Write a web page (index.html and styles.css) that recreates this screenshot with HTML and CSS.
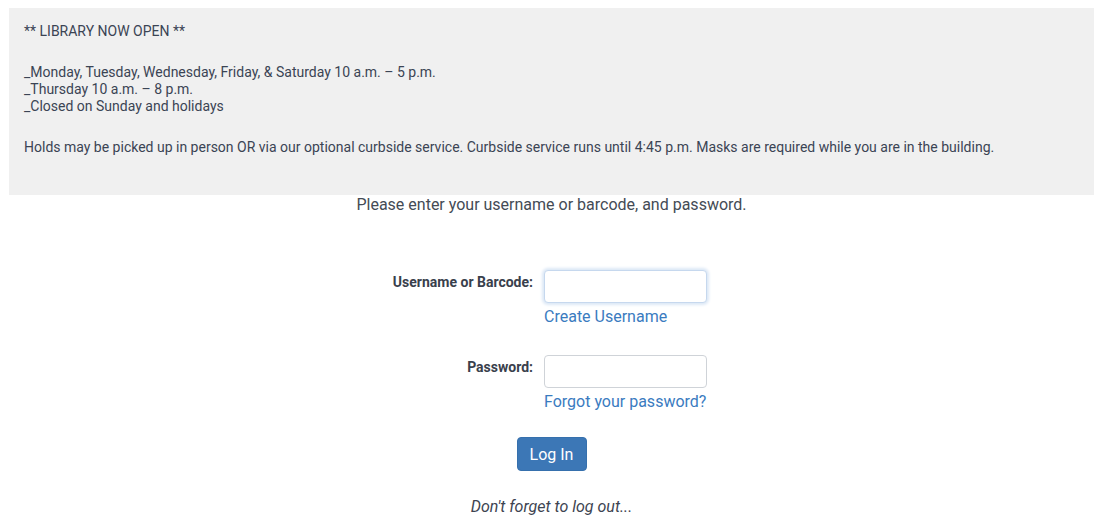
FILE: index.html
```html
<!DOCTYPE html>
<html>
<head>
<meta charset="utf-8">
<link rel="stylesheet" href="styles.css">
</head>
<body>
<div class="page">
  <div class="notice">
    <p>** LIBRARY NOW OPEN **</p>
    <p>_Monday, Tuesday, Wednesday, Friday, &amp; Saturday 10 a.m. – 5 p.m.<br>_Thursday 10 a.m. – 8 p.m.<br>_Closed on Sunday and holidays</p>
    <p>Holds may be picked up in person OR via our optional curbside service. Curbside service runs until 4:45 p.m. Masks are required while you are in the building.</p>
  </div>
  <div class="intro">Please enter your username or barcode, and password.</div>
  <form class="login">
    <div class="row">
      <label class="lbl" for="u">Username or Barcode:</label>
      <div class="field">
        <input id="u" class="inp focus" type="text">
        <a class="link" href="#">Create Username</a>
      </div>
    </div>
    <div class="row second">
      <label class="lbl" for="p">Password:</label>
      <div class="field">
        <input id="p" class="inp" type="password">
        <a class="link" href="#">Forgot your password?</a>
      </div>
    </div>
    <div class="actions"><button type="button" class="btn">Log In</button></div>
  </form>
  <div class="bye">Don't forget to log out...</div>
</div>
</body>
</html>
```
FILE: styles.css
```css
html, body { margin: 0; padding: 0; background: #fff; }
body { font-family: Roboto, "Liberation Sans", sans-serif; color: #3d4451; }
.page { padding: 8px 11px 0 9px; }
.notice {
  background: #f0f0f0;
  padding: 15px 15px 39px 15px;
  font-size: 14px;
  line-height: 17px;
  color: #3b4454;
}
.notice p { margin: 0 0 24px 0; }
.notice p:last-child { margin-bottom: 0; }
.intro {
  text-align: center;
  font-size: 16px;
  line-height: 20px;
  color: #444b55;
  margin-top: 0;
}
.login { margin-top: 55px; }
.row {
  display: grid;
  grid-template-columns: 524px 1fr;
  column-gap: 11px;
}
.row.second { margin-top: 28px; }
.lbl {
  text-align: right;
  font-size: 14px;
  font-weight: 700;
  line-height: 17px;
  padding-top: 4px;
  color: #39404c;
}
.field { display: flex; flex-direction: column; align-items: flex-start; }
.inp {
  box-sizing: border-box;
  width: 163px;
  height: 33px;
  border: 1px solid #cfd3d8;
  border-radius: 4px;
  background: #fff;
  margin: 0;
  padding: 0 12px;
  font-family: Roboto, sans-serif;
  font-size: 15px;
}
.inp.focus {
  border-color: #c6d8ee;
  box-shadow: 0 0 3px 2px #dce8f6;
  outline: none;
}
.link {
  color: #3a7bbf;
  text-decoration: none;
  font-size: 16px;
  line-height: 20px;
  margin-top: 4px;
}
.actions { display: flex; justify-content: center; margin-top: 25px; }
.btn {
  background: #3c77b6;
  color: #fff;
  border: 1px solid #3670ad;
  border-radius: 4px;
  font-family: Roboto, sans-serif;
  font-size: 16px;
  width: 70px;
  height: 34px;
  padding: 0;
}
.bye {
  text-align: center;
  font-style: italic;
  font-size: 16px;
  line-height: 20px;
  margin-top: 26px;
  color: #3d4451;
}
```
